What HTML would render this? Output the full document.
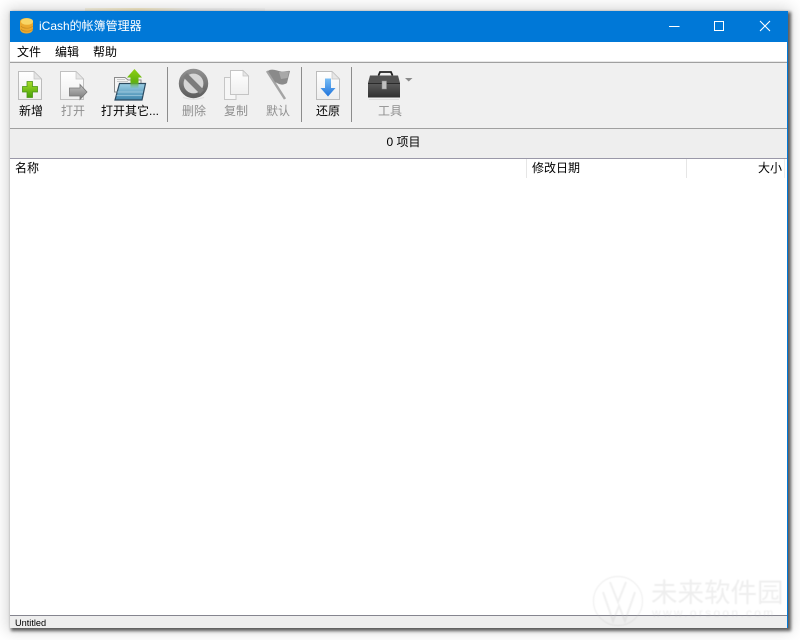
<!DOCTYPE html>
<html><head><meta charset="utf-8">
<style>
html,body{margin:0;padding:0;width:800px;height:640px;overflow:hidden;background:#fff}
body{position:relative;font-family:"Liberation Sans","Noto Sans CJK SC",sans-serif;font-size:12px;color:#000}
.a{position:absolute}
.t{position:absolute;white-space:nowrap;line-height:16px;font-size:12px}
.g{color:#8f8f8f}
.c{transform:translateX(-50%)}
.sep{position:absolute;top:67px;width:1px;height:55px;background:#8c8c8c}
</style></head><body>
<div class="a" style="left:85px;top:8px;width:180px;height:3px;background:linear-gradient(90deg,#f0e2b0,#e8c860 30%,#ddd 60%,#eee);opacity:.35"></div>
<div class="a" style="left:10px;top:11px;width:778px;height:617px;background:#fff;box-shadow:2px 2px 3px 1px rgba(0,0,0,.6),0 0 14px 3px rgba(0,0,0,.16)"></div>
<div class="a" style="left:10px;top:11px;width:778px;height:31px;background:#0078d7"></div>
<div class="a" style="left:787px;top:11px;width:1px;height:617px;background:#0078d7"></div>
<svg class="a" style="left:18px;top:17px;filter:blur(.3px)" width="17" height="18" viewBox="0 0 17 18">
<path d="M2 4.500C2 2.500 5 1 8.500 1S15 2.500 15 4.500V12c0 2.500-2.500 4.500-6.500 4.500S2 14.500 2 12z" fill="#eba92e"/>
<ellipse cx="9" cy="4.500" rx="6" ry="3.300" fill="#f8d565"/>
<path d="M3 9c1 1.500 3 2.200 6 2.200s4-.7 6-2.200M3 12c1 1.500 3 2.200 6 2.200s4-.7 6-2.200" stroke="#c98a22" fill="none" stroke-width=".7"/></svg>
<div class="t" style="left:39px;top:18px;color:#fff">iCash的帐簿管理器</div>
<svg class="a" style="left:660px;top:11px" width="128" height="31" viewBox="0 0 128 31" fill="none" stroke="#fff">
<path d="M9 15.500H19.500"/><rect x="54.500" y="10.500" width="9" height="9"/><path d="M100 10L110 20M110 10L100 20" stroke-width="1.100"/></svg>
<div class="t" style="left:17px;top:44px">文件</div>
<div class="t" style="left:55px;top:44px">编辑</div>
<div class="t" style="left:93px;top:44px">帮助</div>

<div class="a" style="left:10px;top:61px;width:777px;height:1px;background:#e8e8e8"></div>
<div class="a" style="left:10px;top:62px;width:777px;height:1px;background:#a0a0a0"></div>
<div class="a" style="left:10px;top:63px;width:777px;height:65px;background:#f0f0f0"></div>
<div class="a" style="left:10px;top:128px;width:777px;height:1px;background:#a0a0a0"></div>

<svg class="a" style="left:0;top:63px;filter:blur(.3px)" width="430" height="45" viewBox="0 63 430 45">
<defs>
<linearGradient id="p" x1="0" y1="0" x2="0" y2="1"><stop offset="0" stop-color="#fff"/><stop offset="1" stop-color="#eeeeee"/></linearGradient>
<linearGradient id="gr" x1="0" y1="0" x2="0" y2="1"><stop offset="0" stop-color="#a8de2a"/><stop offset="1" stop-color="#44a008"/></linearGradient>
<linearGradient id="ga" x1="0" y1="0" x2="0" y2="1"><stop offset="0" stop-color="#8fd014"/><stop offset=".7" stop-color="#5fb010"/><stop offset="1" stop-color="#6fb8a0" stop-opacity=".3"/></linearGradient>
<linearGradient id="bl" x1="0" y1="0" x2="0" y2="1"><stop offset="0" stop-color="#78bdf5"/><stop offset="1" stop-color="#1f74dc"/></linearGradient>
<linearGradient id="fo" x1="0" y1="0" x2="0" y2="1"><stop offset="0" stop-color="#9dd0e6"/><stop offset="1" stop-color="#3f86ad"/></linearGradient>
<linearGradient id="dk" x1="0" y1="0" x2="0" y2="1"><stop offset="0" stop-color="#5a5a5a"/><stop offset="1" stop-color="#303030"/></linearGradient>
<linearGradient id="ar" x1="0" y1="0" x2="0" y2="1"><stop offset="0" stop-color="#c4c4c4"/><stop offset="1" stop-color="#777"/></linearGradient>
<linearGradient id="rg" x1="0" y1="0" x2="0" y2="1"><stop offset="0" stop-color="#8f8f8f"/><stop offset="1" stop-color="#5f5f5f"/></linearGradient>
</defs>
<!-- new -->
<path d="M18.500 71.500H34L41.500 79V99.500H18.500z" fill="url(#p)" stroke="#bcbcbc"/><path d="M34 71.500V79H41.500z" fill="#e4e4e4" stroke="#c4c4c4" stroke-width=".7"/>
<path d="M27 81.500H32.500V86.500H37.500V92H32.500V97.500H27V92H22.500V86.500H27z" fill="url(#gr)" stroke="#4b9414" stroke-width=".8"/>
<!-- open -->
<path d="M60.500 71.500H76L83.500 79V99.500H60.500z" fill="url(#p)" stroke="#c0c0c0"/><path d="M76 71.500V79H83.500z" fill="#e6e6e6" stroke="#c4c4c4" stroke-width=".7"/>
<path d="M69.500 88H80V84.500L87 92L80 99.500V96H69.500z" fill="url(#ar)" stroke="#777" stroke-width=".8"/>
<!-- open other -->
<path d="M114.500 77.500H125L128 80H141V92H114.500z" fill="#f5f5f5" stroke="#8c8c8c"/>
<path d="M117 79.500H125M117 81.500H128" stroke="#bbb" stroke-width=".7"/>
<path d="M119.500 83.500H145.500L142 100H115z" fill="url(#fo)" stroke="#2c4a60" stroke-width="1.200"/>
<path d="M117 92H143M116.500 95.500H142.500" stroke="#cfeaf4" stroke-width=".8" opacity=".6"/>
<path d="M134.500 69L142 77.500H138.500V88H130.500V77.500H127z" fill="url(#ga)"/>
<!-- delete -->
<circle cx="193.500" cy="83.500" r="12.300" fill="#d6d6d6" stroke="url(#rg)" stroke-width="4.800"/>
<path d="M185 75L202 92" stroke="#7c7c7c" stroke-width="5.500"/>
<path d="M183 97.500Q193.500 101 204 97.500" stroke="#ddd" fill="none"/>
<!-- copy -->
<path d="M224.500 77.500H236V99.500H224.500z" fill="#f6f6f6" stroke="#c6c6c6"/>
<path d="M230.500 70.500H243L248.500 76V94.500H230.500z" fill="url(#p)" stroke="#c4c4c4"/>
<path d="M243 70.500V76H248.500z" fill="#e6e6e6" stroke="#c4c4c4" stroke-width=".7"/>
<!-- flag -->
<path d="M267 71L285 99" stroke="#a4a4a4" stroke-width="2.500"/>
<path d="M268 71C272 68 277 71 281 71.500C284 72 287 70.500 290 71L287 83C284 85 281 85 278 83.500L275 82z" fill="#8a8a8a"/>
<path d="M279 72C282 72.500 286 71 289 71.500L287.500 78L281 79z" fill="#a8a8a8"/>
<!-- restore -->
<path d="M316.500 71.500H332L339.500 79V99.500H316.500z" fill="url(#p)" stroke="#bcbcbc"/><path d="M332 71.500V79H339.500z" fill="#e6e6e6" stroke="#c4c4c4" stroke-width=".7"/>
<path d="M325 78.500H331V88H335.500L328 96.500L320.500 88H325z" fill="url(#bl)"/>
<!-- tools -->
<path d="M378.500 75.500L380 72H391L392.500 75.500" fill="none" stroke="#222" stroke-width="1.800"/>
<path d="M370 75.500H398L400 83H368z" fill="#525252"/>
<rect x="368" y="83.500" width="32" height="14" fill="url(#dk)"/>
<rect x="368" y="83" width="32" height="1" fill="#2a2a2a"/>
<rect x="382" y="81" width="4.500" height="8" fill="#c0c0c0" stroke="#8c8c8c" stroke-width=".5"/>
<path d="M369 99.500H399" stroke="#dedede"/>
<path d="M405 78H412.500L408.700 81.500z" fill="#8a8a8a"/>
</svg>
<div class="t c" style="left:31px;top:103px">新增</div>
<div class="t c g" style="left:73px;top:103px">打开</div>
<div class="t c" style="left:130px;top:103px">打开其它...</div>
<div class="t c g" style="left:194px;top:103px">删除</div>
<div class="t c g" style="left:236px;top:103px">复制</div>
<div class="t c g" style="left:278px;top:103px">默认</div>
<div class="t c" style="left:328px;top:103px">还原</div>
<div class="t c g" style="left:390px;top:103px">工具</div>
<div class="sep" style="left:167px"></div>
<div class="sep" style="left:301px"></div>
<div class="sep" style="left:351px"></div>

<div class="a" style="left:10px;top:129px;width:777px;height:29px;background:#eee"></div>
<div class="t" style="left:0;top:134px;width:807px;text-align:center">0 项目</div>
<div class="a" style="left:10px;top:158px;width:777px;height:1px;background:#9a98a8"></div>
<div class="t" style="left:15px;top:160px">名称</div>
<div class="t" style="left:532px;top:160px">修改日期</div>
<div class="t" style="left:758px;top:160px">大小</div>
<div class="a" style="left:526px;top:159px;width:1px;height:19px;background:#e6e6e6"></div>
<div class="a" style="left:686px;top:159px;width:1px;height:19px;background:#e6e6e6"></div>
<div class="a" style="left:784px;top:159px;width:1px;height:19px;background:#eee"></div>

<div class="a" style="left:10px;top:615px;width:777px;height:1px;background:#85858f"></div>
<div class="a" style="left:10px;top:616px;width:777px;height:12px;background:#eee"></div>
<div class="t" style="left:15px;top:617px;font-size:9.200px;line-height:13px">Untitled</div>

<!-- watermark -->
<svg class="a" style="left:590px;top:572px;filter:blur(.4px)" width="200" height="60" viewBox="590 572 200 60" fill="none" stroke="#bbb" opacity=".22">
<circle cx="618" cy="601" r="24.500" stroke-width="1.200"/>
<path d="M603 592L613 621L619 606L625 621L635 592M610 582L618 602L626 582" stroke-width="2"/>
<text x="651" y="602" font-size="26.500" fill="#b4b4b4" stroke="none" font-family="'Noto Sans CJK SC',sans-serif">未来软件园</text>
<text x="652" y="617" font-size="12" fill="#b4b4b4" stroke="none" letter-spacing="2.300">www.orsoon.com</text>
</svg>
</body></html>
